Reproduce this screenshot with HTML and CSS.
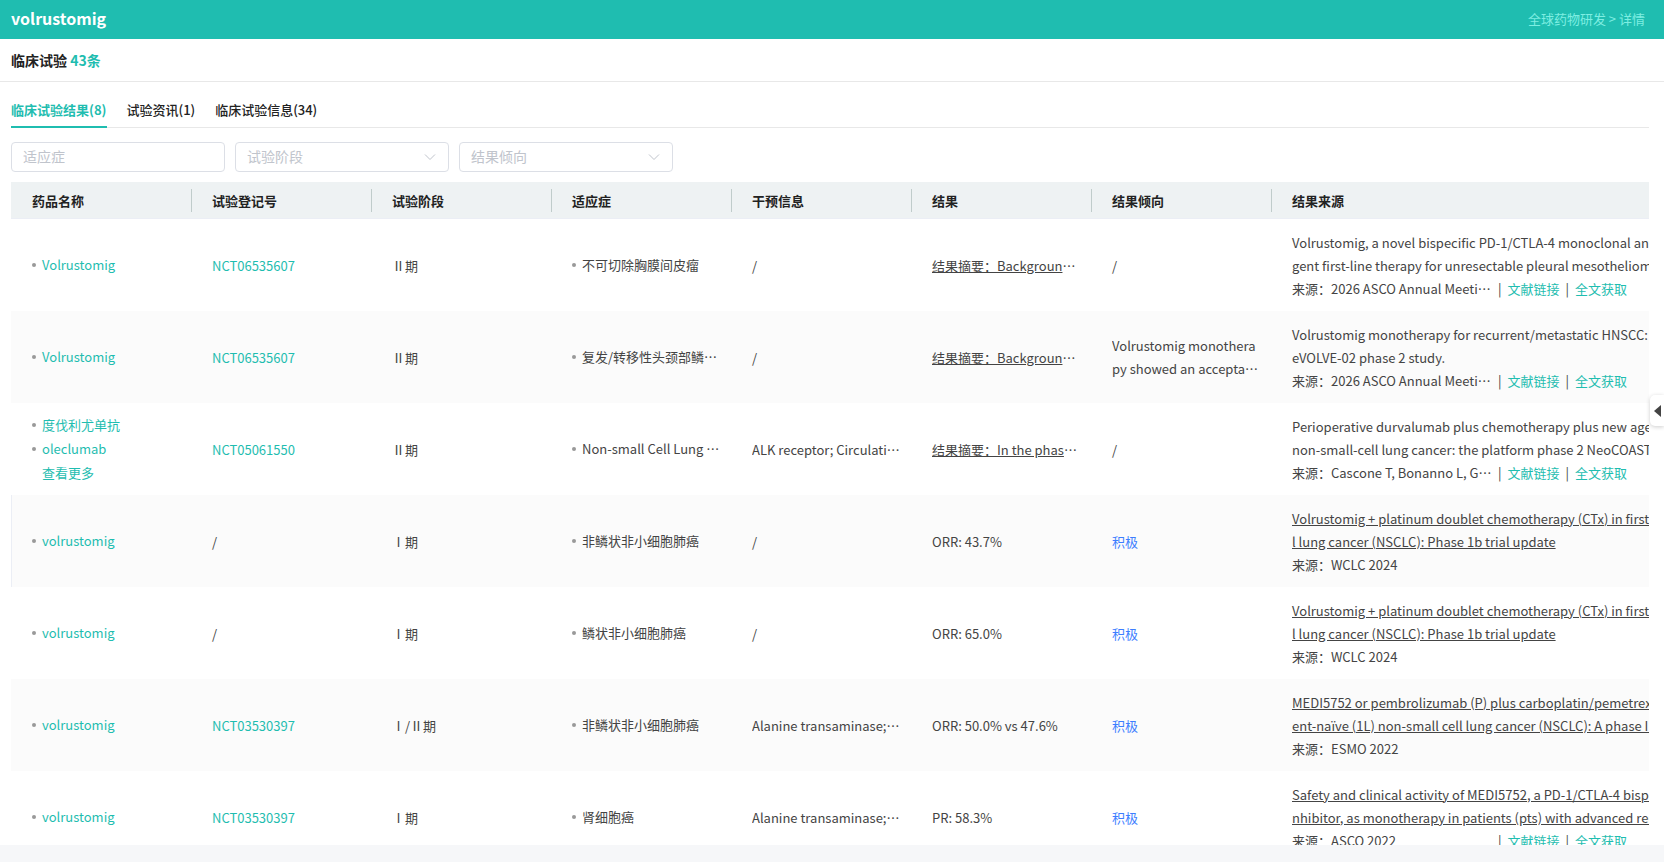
FILE: index.html
```
<!DOCTYPE html>
<html lang="zh-CN">
<head>
    <meta charset="UTF-8">
    <title>volrustomig</title>
    <link rel="stylesheet" href="styles.css">
</head>
<body>
    <header class="topbar">
        <h1>volrustomig</h1>
        <nav class="crumb"><a href="#">全球药物研发</a> &gt; <a href="#">详情</a></nav>
    </header>
    <main class="page">
        <h2 class="section-title">临床试验 <span>43条</span></h2>
        <div class="panel">
            <nav class="tabs">
                <a class="active" href="#">临床试验结果(8)</a>
                <a href="#">试验资讯(1)</a>
                <a href="#">临床试验信息(34)</a>
            </nav>
            <form class="filters">
                <input class="field" type="text" placeholder="适应症" aria-label="适应症">
                <div class="select">
                    <select class="field" aria-label="试验阶段"><option>试验阶段</option></select>
                    <svg viewBox="0 0 12 12"><path d="M1 3.500l5 5 5-5"/></svg>
                </div>
                <div class="select">
                    <select class="field" aria-label="结果倾向"><option>结果倾向</option></select>
                    <svg viewBox="0 0 12 12"><path d="M1 3.500l5 5 5-5"/></svg>
                </div>
            </form>
            <div class="table-wrap">
                <table>
                    <colgroup>
                        <col class="col-first"><col class="col"><col class="col"><col class="col">
                        <col class="col"><col class="col"><col class="col"><col class="col-source">
                    </colgroup>
                    <thead>
                        <tr>
                            <th><div>药品名称</div></th>
                            <th><div>试验登记号</div></th>
                            <th><div>试验阶段</div></th>
                            <th><div>适应症</div></th>
                            <th><div>干预信息</div></th>
                            <th><div>结果</div></th>
                            <th><div>结果倾向</div></th>
                            <th><div>结果来源</div></th>
                        </tr>
                    </thead>
                    <tbody>
                        <tr>
                            <td><ul><li><a href="#">Volrustomig</a></li></ul></td>
                            <td><a href="#">NCT06535607</a></td>
                            <td>Ⅱ期</td>
                            <td><ul><li>不可切除胸膜间皮瘤</li></ul></td>
                            <td>/</td>
                            <td><div class="ellipsis"><u>结果摘要：Background: Vol</u></div></td>
                            <td>/</td>
                            <td>
                                <div class="title">Volrustomig, a novel bispecific PD-1/CTLA-4 monoclonal antibody<br>gent first-line therapy for unresectable pleural mesothelioma</div>
                                <div class="source"><span class="ellipsis">来源：2026 ASCO Annual Meeting</span><i>|</i><a href="#">文献链接</a><i>|</i><a href="#">全文获取</a></div>
                            </td>
                        </tr>
                        <tr>
                            <td><ul><li><a href="#">Volrustomig</a></li></ul></td>
                            <td><a href="#">NCT06535607</a></td>
                            <td>Ⅱ期</td>
                            <td><ul><li>复发/转移性头颈部鳞状细胞</li></ul></td>
                            <td>/</td>
                            <td><div class="ellipsis"><u>结果摘要：Background: Vol</u></div></td>
                            <td><div class="clamp">Volrustomig monotherapy showed an acceptable safety profile</div></td>
                            <td>
                                <div class="title">Volrustomig monotherapy for recurrent/metastatic HNSCC: The<br>eVOLVE-02 phase 2 study.</div>
                                <div class="source"><span class="ellipsis">来源：2026 ASCO Annual Meeting</span><i>|</i><a href="#">文献链接</a><i>|</i><a href="#">全文获取</a></div>
                            </td>
                        </tr>
                        <tr>
                            <td><ul><li><a href="#">度伐利尤单抗</a></li><li><a href="#">oleclumab</a></li><li class="more"><a href="#">查看更多</a></li></ul></td>
                            <td><a href="#">NCT05061550</a></td>
                            <td>Ⅱ期</td>
                            <td><ul><li>Non-small Cell Lung Cancer</li></ul></td>
                            <td><div class="ellipsis">ALK receptor; Circulating</div></td>
                            <td><div class="ellipsis"><u>结果摘要：In the phase 2 s</u></div></td>
                            <td>/</td>
                            <td>
                                <div class="title">Perioperative durvalumab plus chemotherapy plus new agents<br>non-small-cell lung cancer: the platform phase 2 NeoCOAST-2</div>
                                <div class="source"><span class="ellipsis">来源：Cascone T, Bonanno L, Guisier</span><i>|</i><a href="#">文献链接</a><i>|</i><a href="#">全文获取</a></div>
                            </td>
                        </tr>
                        <tr class="marked">
                            <td><ul><li><a href="#">volrustomig</a></li></ul></td>
                            <td>/</td>
                            <td>Ⅰ期</td>
                            <td><ul><li>非鳞状非小细胞肺癌</li></ul></td>
                            <td>/</td>
                            <td>ORR: 43.7%</td>
                            <td class="positive">积极</td>
                            <td>
                                <div class="title"><u>Volrustomig + platinum doublet chemotherapy (CTx) in first-line<br>l lung cancer (NSCLC): Phase 1b trial update</u></div>
                                <div class="source"><span class="ellipsis">来源：WCLC 2024</span></div>
                            </td>
                        </tr>
                        <tr>
                            <td><ul><li><a href="#">volrustomig</a></li></ul></td>
                            <td>/</td>
                            <td>Ⅰ期</td>
                            <td><ul><li>鳞状非小细胞肺癌</li></ul></td>
                            <td>/</td>
                            <td>ORR: 65.0%</td>
                            <td class="positive">积极</td>
                            <td>
                                <div class="title"><u>Volrustomig + platinum doublet chemotherapy (CTx) in first-line<br>l lung cancer (NSCLC): Phase 1b trial update</u></div>
                                <div class="source"><span class="ellipsis">来源：WCLC 2024</span></div>
                            </td>
                        </tr>
                        <tr>
                            <td><ul><li><a href="#">volrustomig</a></li></ul></td>
                            <td><a href="#">NCT03530397</a></td>
                            <td>Ⅰ/Ⅱ期</td>
                            <td><ul><li>非鳞状非小细胞肺癌</li></ul></td>
                            <td><div class="ellipsis">Alanine transaminase; AST</div></td>
                            <td>ORR: 50.0% vs 47.6%</td>
                            <td class="positive">积极</td>
                            <td>
                                <div class="title"><u>MEDI5752 or pembrolizumab (P) plus carboplatin/pemetrexed<br>ent-naïve (1L) non-small cell lung cancer (NSCLC): A phase Ib/II</u></div>
                                <div class="source"><span class="ellipsis">来源：ESMO 2022</span></div>
                            </td>
                        </tr>
                        <tr>
                            <td><ul><li><a href="#">volrustomig</a></li></ul></td>
                            <td><a href="#">NCT03530397</a></td>
                            <td>Ⅰ期</td>
                            <td><ul><li>肾细胞癌</li></ul></td>
                            <td><div class="ellipsis">Alanine transaminase; AST</div></td>
                            <td>PR: 58.3%</td>
                            <td class="positive">积极</td>
                            <td>
                                <div class="title"><u>Safety and clinical activity of MEDI5752, a PD-1/CTLA-4 bispecific<br>nhibitor, as monotherapy in patients (pts) with advanced renal</u></div>
                                <div class="source"><span class="ellipsis">来源：ASCO 2022</span><i>|</i><a href="#">文献链接</a><i>|</i><a href="#">全文获取</a></div>
                            </td>
                        </tr>
                    </tbody>
                </table>
            </div>
        </div>
    </main>
    <button class="drawer" type="button" aria-label="展开">
        <svg viewBox="0 0 7 12"><path d="M7 0v12L0 6z"/></svg>
    </button>
</body>
</html>
```
FILE: styles.css
```
* {
    box-sizing: border-box;
}
body {
    display: flex;
    flex-direction: column;
    height: 100vh;
    margin: 0;
    padding-bottom: 17px;
    overflow: hidden;
    background: #f6f7f9;
    color: #444;
    font: 13px/23px "Noto Sans CJK SC", sans-serif;
}
a {
    color: #1fbdb0;
    text-decoration: none;
}
h1, h2, ul {
    margin: 0;
    padding: 0;
}
.topbar {
    display: flex;
    flex: none;
    align-items: center;
    justify-content: space-between;
    height: 39px;
    padding: 0 19px 2px 11px;
    background: #1fbdb0;
    color: #7eeee2;
}
.topbar h1 {
    color: #fff;
    font-size: 16px;
}
.crumb a {
    color: inherit;
}
.page {
    flex: 1;
    min-height: 0;
    overflow: hidden;
    background: #fff;
}
.section-title {
    height: 43px;
    padding-left: 11px;
    border-bottom: 1px solid #e8e8e8;
    color: #222;
    font-size: 14px;
    line-height: 42px;
}
.section-title span {
    color: #1fbdb0;
}
.panel {
    padding: 10px 15px 0 11px;
}

/* tabs */
.tabs {
    display: flex;
    gap: 20px;
    height: 36px;
    border-bottom: 1px solid #e8e8e8;
    line-height: 36px;
}
.tabs a {
    height: 36px;
    color: #222;
    font-weight: 500;
}
.tabs .active {
    border-bottom: 2px solid #1fbdb0;
    color: #1fbdb0;
    font-weight: bold;
}

/* filters */
.filters {
    display: flex;
    gap: 10px;
    margin: 14px 0 10px;
}
.select {
    position: relative;
}
.field {
    display: block;
    width: 214px;
    height: 30px;
    padding: 0 11px 2px;
    border: 1px solid #dcdfe6;
    border-radius: 4px;
    background: #fff;
    color: #c0c4cc;
    font: inherit;
    font-size: 14px;
    appearance: none;
}
.field::placeholder {
    color: #c0c4cc;
}
.select svg {
    position: absolute;
    top: 9px;
    right: 13px;
    width: 12px;
    height: 12px;
    fill: none;
    stroke: #c0c4cc;
    pointer-events: none;
}

/* table */
.table-wrap {
    overflow: hidden;
}
table {
    width: 1741px;
    border-spacing: 0;
    table-layout: fixed;
}
.col {
    width: 180px;
}
.col-first {
    width: 181px;
}
th {
    height: 37px;
    padding: 0;
    border-bottom: 1px solid #ebeef5;
    background: #eef2f3;
    color: #222;
    text-align: left;
}
th div {
    padding-left: 20px;
    border-right: 1px solid #c0cccb;
}
td {
    height: 92px;
    padding: 0 10px 0 20px;
}
th:first-child div,
td:first-child {
    padding-left: 21px;
}
tbody tr:nth-child(even) {
    background: #fbfbfb;
}
.marked td:first-child {
    box-shadow: inset 1px 0 #ebeef5;
}
.ellipsis {
    overflow: hidden;
    text-overflow: ellipsis;
    white-space: nowrap;
}
.clamp {
    display: -webkit-box;
    overflow: hidden;
    word-break: break-all;
    -webkit-box-orient: vertical;
    -webkit-line-clamp: 2;
}
td ul {
    list-style: none;
    line-height: 24px;
}
td li {
    position: relative;
    padding-left: 10px;
    overflow: hidden;
    text-overflow: ellipsis;
    white-space: nowrap;
}
td li::before {
    content: "";
    position: absolute;
    top: 10px;
    left: 0;
    width: 4px;
    height: 4px;
    border-radius: 50%;
    background: #999;
}
td .more::before {
    display: none;
}
.positive {
    color: #3d7eff;
}
.title {
    white-space: nowrap;
}
.source {
    display: flex;
}
.source .ellipsis {
    width: 200px;
}
.source i {
    margin: 0 6px;
    font-style: normal;
}

/* side drawer handle */
.drawer {
    position: fixed;
    top: 395px;
    right: 0;
    display: flex;
    align-items: center;
    width: 14px;
    height: 31px;
    padding: 0 0 0 4px;
    border: 0;
    border-radius: 5px 0 0 5px;
    background: #fff;
    box-shadow: 0 1px 4px rgba(0, 0, 0, .2);
}
.drawer svg {
    width: 7px;
    height: 12px;
    fill: #444;
}
```
